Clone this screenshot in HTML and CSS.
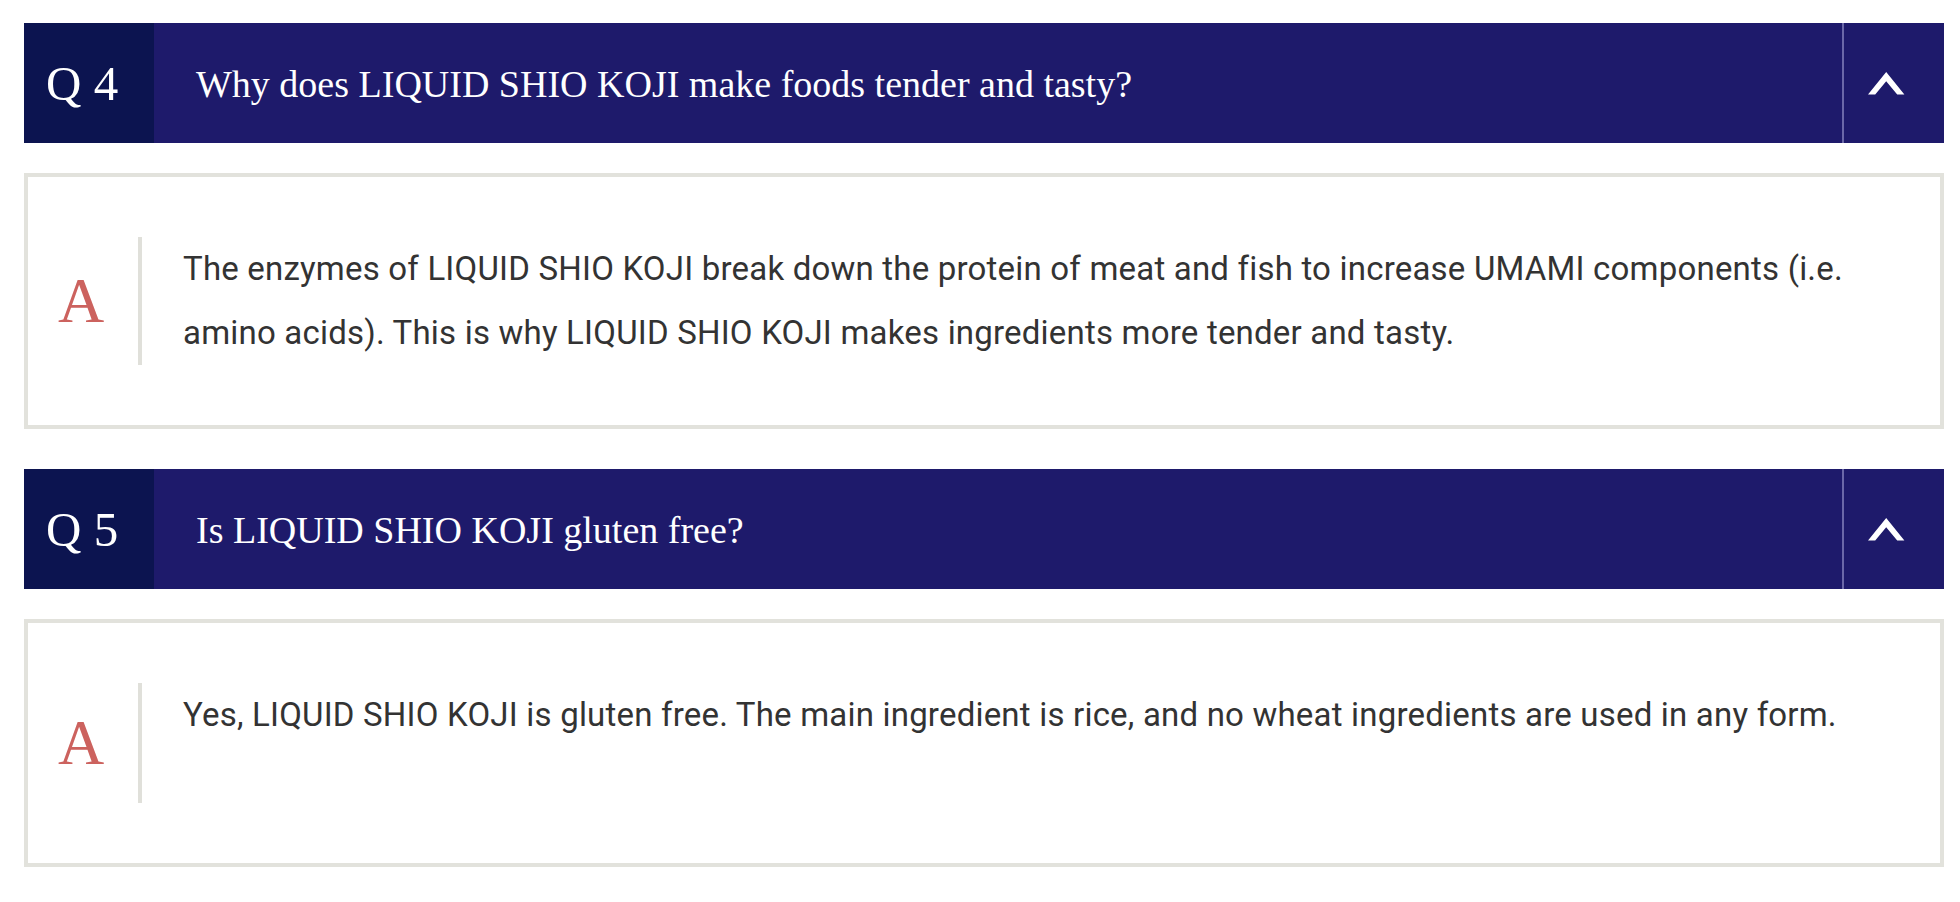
FILE: index.html
```html
<!DOCTYPE html>
<html lang="en">
<head>
<meta charset="utf-8">
<title>FAQ</title>
<link rel="stylesheet" href="styles.css">
</head>
<body>
<div class="faq">
  <div class="item">
    <div class="q">
      <div class="q-num">Q 4</div>
      <div class="q-text">Why does LIQUID SHIO KOJI make foods tender and tasty?</div>
      <div class="q-toggle">
        <svg class="chev" width="37" height="23" viewBox="0 0 37 23"><polygon points="0,22.5 18.2,0 36.4,22.5 29.2,22.5 18.2,9.2 7.2,22.5" fill="#ffffff"/></svg>
      </div>
    </div>
    <div class="a">
      <div class="a-mark">A</div>
      <div class="a-body">The enzymes of LIQUID SHIO KOJI break down the protein of meat and fish to increase UMAMI components (i.e. amino acids). This is why LIQUID SHIO KOJI makes ingredients more tender and tasty.</div>
    </div>
  </div>
  <div class="item">
    <div class="q">
      <div class="q-num">Q 5</div>
      <div class="q-text">Is LIQUID SHIO KOJI gluten free?</div>
      <div class="q-toggle">
        <svg class="chev" width="37" height="23" viewBox="0 0 37 23"><polygon points="0,22.5 18.2,0 36.4,22.5 29.2,22.5 18.2,9.2 7.2,22.5" fill="#ffffff"/></svg>
      </div>
    </div>
    <div class="a">
      <div class="a-mark">A</div>
      <div class="a-body">Yes, LIQUID SHIO KOJI is gluten free. The main ingredient is rice, and no wheat ingredients are used in any form.</div>
    </div>
  </div>
</div>
</body>
</html>
```

FILE: styles.css
```css
html, body {
  margin: 0;
  padding: 0;
  background: #ffffff;
}

.faq {
  width: 1920px;
  padding: 23px 0 0 24px;
  display: flex;
  flex-direction: column;
  gap: 40px;
}

.item {
  display: flex;
  flex-direction: column;
  gap: 30px;
}

.q {
  display: flex;
  height: 120px;
  background: #1e1a6b;
  color: #ffffff;
  font-family: "Liberation Serif", "Times New Roman", serif;
}

.q-num {
  width: 130px;
  box-sizing: border-box;
  padding-left: 22px;
  background: #0c1450;
  display: flex;
  align-items: center;
  font-size: 49px;
  white-space: pre;
}

.q-text {
  flex: 1;
  display: flex;
  align-items: center;
  padding-left: 42px;
  font-size: 38px;
  padding-top: 2px;
}

.q-toggle {
  width: 102px;
  box-sizing: border-box;
  border-left: 2px solid #6b68a8;
  display: flex;
  align-items: center;
  padding-left: 24px;
}

.chev {
  display: block;
}

.a {
  border: 4px solid #e2e2dc;
  padding: 60px 60px 60px 30px;
  display: flex;
  align-items: center;
  background: #ffffff;
}

.a-mark {
  width: 80px;
  flex: none;
  font-family: "Liberation Serif", "Times New Roman", serif;
  font-size: 64px;
  line-height: 1;
  color: #cc625e;
}

.a-body {
  flex: 1;
  min-height: 120px;
  box-sizing: border-box;
  border-left: 4px solid #e0e0da;
  padding-left: 41px;
  font-family: Roboto, "Noto Sans", sans-serif;
  font-size: 33px;
  letter-spacing: 0.2px;
  line-height: 64px;
  color: #333333;
}
```
